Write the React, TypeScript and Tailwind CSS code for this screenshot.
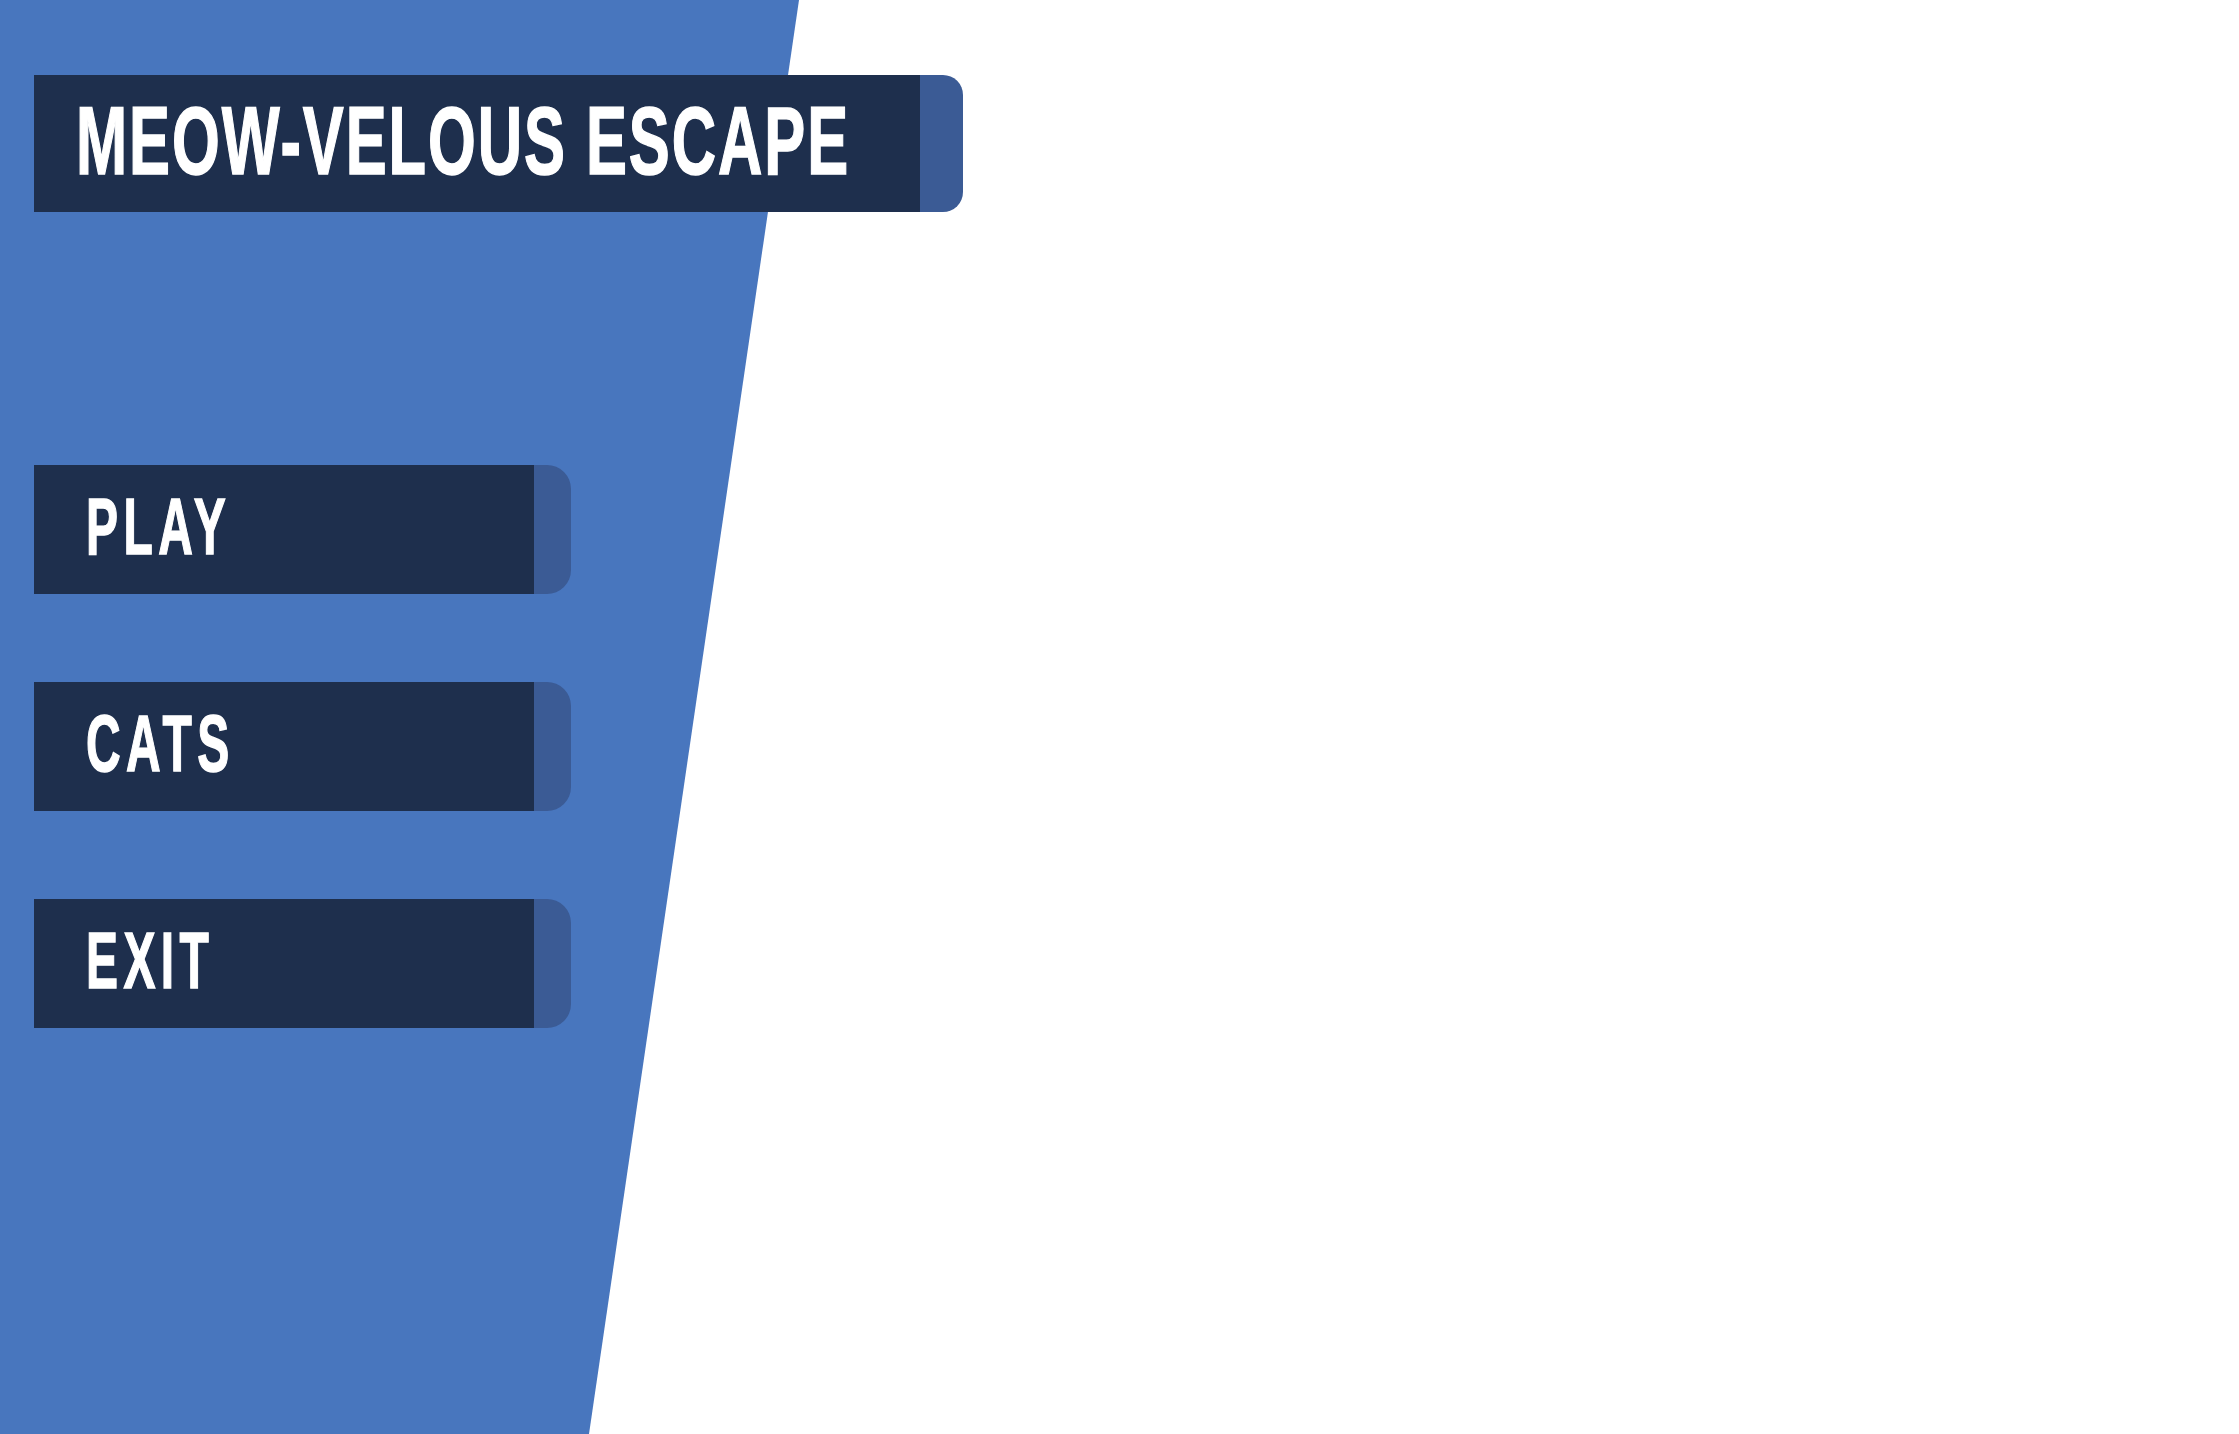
const BUTTONS = ['PLAY', 'CATS', 'EXIT'];

function MenuButton({ label }: { label: string }) {
  return (
    <button className="flex h-[129px] w-[537px] items-stretch text-left">
      <div className="w-[500px] min-w-0 bg-[#1e2f4d] pl-[52px] pt-[22px]">
        <span className="block origin-left scale-x-[0.6] whitespace-nowrap font-['Liberation_Sans',Arial,sans-serif] text-[80px] font-bold leading-none tracking-[9px] text-white [-webkit-text-stroke:1.5px_white]">
          {label}
        </span>
      </div>
      <div className="w-[37px] rounded-r-[24px] bg-[#3b5b95]" />
    </button>
  );
}

export default function App() {
  return (
    <div className="relative h-[1434px] w-[2239px] overflow-hidden bg-white">
      {/* slanted blue backdrop */}
      <div className="absolute inset-0 bg-[#4876be] [clip-path:polygon(0_0,799px_0,589px_100%,0_100%)]" />

      <div className="relative flex flex-col pl-[34px] pt-[75px]">
        {/* Title */}
        <div className="flex h-[137px] w-[929px]">
          <div className="w-[886px] min-w-0 bg-[#1e2f4d] pl-[42px] pt-[18px]">
            <h1 className="origin-left scale-x-[0.64] whitespace-nowrap font-['Liberation_Sans',Arial,sans-serif] text-[96px] font-bold leading-none tracking-[3px] text-white [-webkit-text-stroke:1.5px_white]">
              MEOW-VELOUS ESCAPE
            </h1>
          </div>
          <div className="w-[43px] rounded-r-[20px] bg-[#3b5b95]" />
        </div>

        {/* Menu */}
        <div className="mt-[253px] flex flex-col gap-[88px]">
          {BUTTONS.map((b) => (
            <MenuButton key={b} label={b} />
          ))}
        </div>
      </div>
    </div>
  );
}
